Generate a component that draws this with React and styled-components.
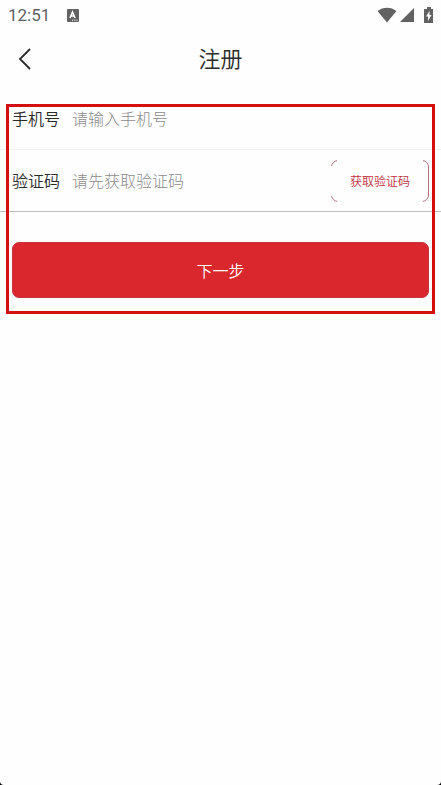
import React, { useState } from "react";
import styled, { createGlobalStyle } from "styled-components";

const GlobalStyle = createGlobalStyle`
  * {
    box-sizing: border-box;
  }

  body {
    margin: 0;
    background-color: black;
    font-family: "Noto Sans CJK SC", sans-serif;
  }
`;

const Screen = styled.div`
  min-height: 100vh;
  background-color: #fefefe;
  border-radius: 0 0 4px 4px;
`;

const StatusBar = styled.div`
  display: flex;
  align-items: center;
  justify-content: space-between;
  height: 30px;
  padding: 0 7px 0 8px;
  color: #626262;
`;

const StatusGroup = styled.div`
  display: flex;
  align-items: center;
  gap: ${(props) => props.$gap};
`;

const Clock = styled.span`
  font-family: Roboto, sans-serif;
  font-size: 17px;
  line-height: 20px;
`;

const Header = styled.header`
  display: grid;
  grid-template-columns: 48px 1fr 48px;
  align-items: center;
  height: 58px;
`;

const BackButton = styled.button`
  display: flex;
  align-items: center;
  height: 48px;
  padding: 0 0 0 18px;
  border: none;
  background: none;
  color: #2b2b2b;
  cursor: pointer;
`;

const Title = styled.h1`
  margin: 0;
  padding-bottom: 4px;
  color: #2b2b2b;
  font-size: 22px;
  font-weight: 350;
  line-height: 32px;
  text-align: center;
`;

const Form = styled.form`
  position: relative;
`;

const Field = styled.div`
  display: flex;
  align-items: center;
  height: 62px;
  padding: 0 12px;
  border-bottom: 1px solid ${(props) => props.$line};
`;

const FieldLabel = styled.label`
  width: 60px;
  padding-bottom: 2px;
  color: #2b2b2b;
  font-size: 16px;
  font-weight: 350;
  line-height: 24px;
`;

const FieldInput = styled.input`
  flex: 1;
  min-width: 0;
  padding: 0 0 2px;
  border: none;
  outline: none;
  background: none;
  color: #333;
  font-family: inherit;
  font-size: 16px;
  line-height: 24px;

  &::placeholder {
    color: #8c8c8c;
    font-weight: 300;
    opacity: 1;
  }
`;

// the outline only shows on the corners and the right side
const CodeButton = styled.button`
  position: relative;
  width: 98px;
  height: 42px;
  padding: 0;
  border: 1px solid #b5707c;
  border-radius: 7px;
  background-color: #fefefe;
  color: #bf3040;
  font-family: inherit;
  font-size: 12px;
  font-weight: 350;
  line-height: 20px;
  cursor: pointer;

  &::before,
  &::after {
    content: "";
    position: absolute;
    background-color: #fefefe;
  }

  &::before {
    inset: -1px 5px;
  }

  &::after {
    inset: 5px 50% 5px -1px;
  }
`;

const CodeButtonText = styled.span`
  position: relative;
  z-index: 1;
`;

const Actions = styled.div`
  padding: 30px 12px 0;
`;

const NextButton = styled.button`
  display: block;
  width: 100%;
  height: 56px;
  border: 1px solid #c93440;
  border-radius: 7px;
  background-color: #d9272d;
  color: white;
  font-family: inherit;
  font-size: 16px;
  font-weight: 350;
  cursor: pointer;
`;

const Highlight = styled.div`
  position: absolute;
  inset: 16px 6px -16px;
  border: 3px solid #d4100f;
  pointer-events: none;
`;

const App = () => {
  const [phone, setPhone] = useState("");
  const [code, setCode] = useState("");

  return (
    <>
      <GlobalStyle />
      <Screen>
        <StatusBar>
          <StatusGroup $gap="17px">
            <Clock>12:51</Clock>
            <svg width="12" height="13" viewBox="0 0 12 13" aria-hidden="true">
              <rect width="12" height="13" rx="1" fill="currentColor" />
              <path
                d="M3 9 L5.5 3 L8 9 M4 7 H7"
                fill="none"
                stroke="white"
                strokeWidth="1.6"
              />
              <path d="M5 11.2 H11" stroke="white" strokeDasharray="1.2 1" />
            </svg>
          </StatusGroup>
          <StatusGroup $gap="3px">
            <svg width="20" height="16" viewBox="0 0 20 16" aria-hidden="true">
              <path
                d="M0.5 4 C6 -0.5 14 -0.5 19.5 4 L10 15.5 Z"
                fill="currentColor"
              />
            </svg>
            <svg width="14" height="16" viewBox="0 0 14 16" aria-hidden="true">
              <path d="M14 1 V15 H0 Z" fill="currentColor" />
            </svg>
            <svg width="17" height="16" viewBox="0 0 17 16" aria-hidden="true">
              <path
                d="M7 2 H10 V0 H14 V2 H16 V16 H7 Z"
                fill="currentColor"
              />
              <path d="M12.5 4 L9 9.5 H11 V14 L14.5 8 H12.5 Z" fill="white" />
            </svg>
          </StatusGroup>
        </StatusBar>
        <Header>
          <BackButton type="button" aria-label="返回">
            <svg width="14" height="22" viewBox="0 0 14 22" aria-hidden="true">
              <path
                d="M12 1 L2 11 L12 21"
                fill="none"
                stroke="currentColor"
                strokeWidth="1.8"
              />
            </svg>
          </BackButton>
          <Title>注册</Title>
        </Header>
        <Form onSubmit={(event) => event.preventDefault()}>
          <Field $line="#f3f3f3">
            <FieldLabel htmlFor="phone">手机号</FieldLabel>
            <FieldInput
              id="phone"
              type="tel"
              placeholder="请输入手机号"
              value={phone}
              onChange={(event) => setPhone(event.target.value)}
            />
          </Field>
          <Field $line="#bdbdbd">
            <FieldLabel htmlFor="code">验证码</FieldLabel>
            <FieldInput
              id="code"
              type="text"
              placeholder="请先获取验证码"
              value={code}
              onChange={(event) => setCode(event.target.value)}
            />
            <CodeButton type="button">
              <CodeButtonText>获取验证码</CodeButtonText>
            </CodeButton>
          </Field>
          <Actions>
            <NextButton type="submit">下一步</NextButton>
          </Actions>
          <Highlight />
        </Form>
      </Screen>
    </>
  );
};

export default App;
